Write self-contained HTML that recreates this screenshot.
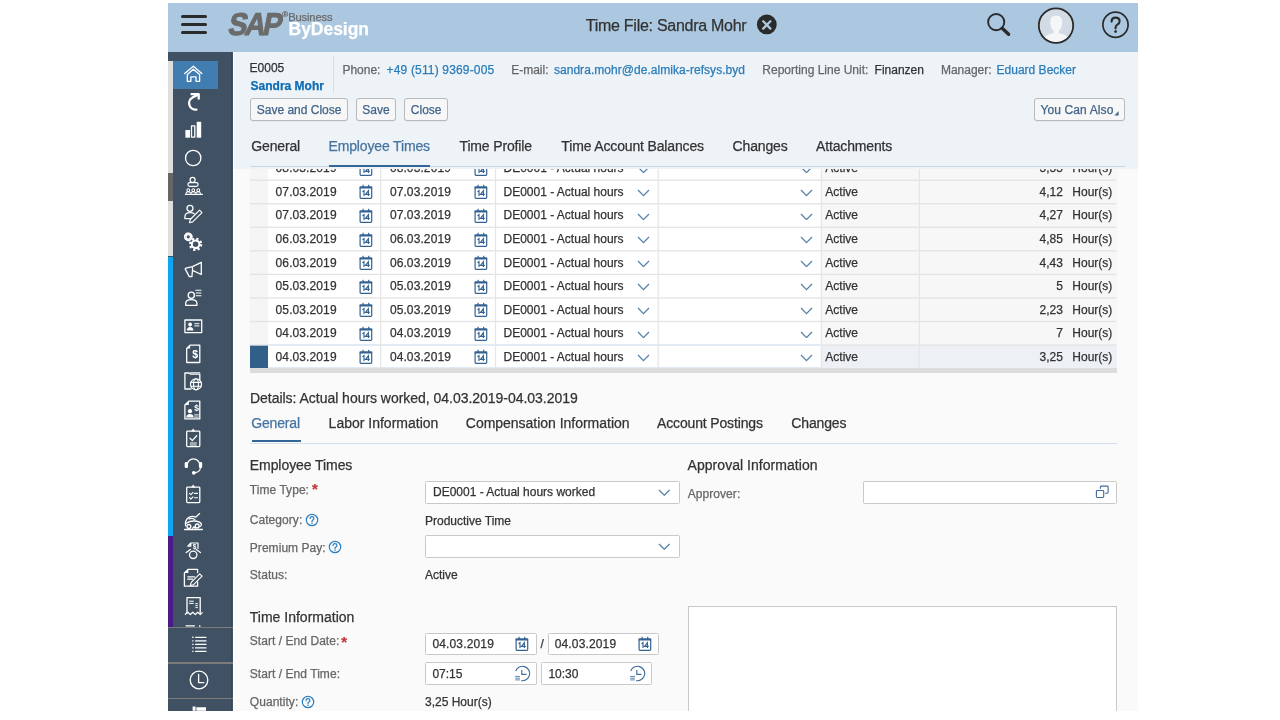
<!DOCTYPE html>
<html><head><meta charset="utf-8">
<style>
*{margin:0;padding:0;box-sizing:border-box}
html,body{width:1280px;height:720px;overflow:hidden;background:#fff;font-family:"Liberation Sans",sans-serif;color:#333}
.a{position:absolute}
.t{position:absolute;white-space:nowrap;line-height:1;-webkit-text-stroke:0.25px currentColor}
.lbl{color:#666;letter-spacing:0.05px}
.lbh{color:#666}
.lnk{color:#2b7cb9}
.dk{color:#333}
.btxt{color:#41648a}
.tsel{color:#4674a0}
</style></head><body>
<div id="root" style="position:absolute;left:0;top:0;width:1280px;height:720px;overflow:hidden;will-change:transform">

<div class="a" style="left:168.00px;top:3.00px;width:970.00px;height:707.80px;background:#fafafa;"></div>
<div class="a" style="left:250.00px;top:156.65px;width:17.80px;height:23.55px;background:#f5f5f5;"></div>
<div class="a" style="left:267.80px;top:156.65px;width:553.60px;height:23.55px;background:#fff;"></div>
<div class="a" style="left:821.40px;top:156.65px;width:295.20px;height:23.55px;background:#f7f7f7;"></div>
<div class="t dk" style="left:275.60px;top:162.39px;font-size:12px;letter-spacing:0.1px">08.03.2019</div>
<div class="t dk" style="left:389.90px;top:162.39px;font-size:12px;letter-spacing:0.1px">08.03.2019</div>
<svg class="a" style="left:359.40px;top:160.85px" width="14" height="15" viewBox="0 0 14 15"><rect x="1.1" y="3.1" width="11.6" height="11.2" rx="0.8" fill="none" stroke="#346392" stroke-width="1.2"/><rect x="0.6" y="2.5" width="12.6" height="2" fill="#346392"/><rect x="3.5" y="0.8" width="1.2" height="2.4" fill="#346392"/><rect x="9.1" y="0.8" width="1.2" height="2.4" fill="#346392"/><path d="M3.5 7.8 L5 6.7 V12.1 M9.4 12.1 V6.7 L6.5 10.3 H10.8" fill="none" stroke="#346392" stroke-width="1.15"/></svg>
<svg class="a" style="left:473.50px;top:160.85px" width="14" height="15" viewBox="0 0 14 15"><rect x="1.1" y="3.1" width="11.6" height="11.2" rx="0.8" fill="none" stroke="#346392" stroke-width="1.2"/><rect x="0.6" y="2.5" width="12.6" height="2" fill="#346392"/><rect x="3.5" y="0.8" width="1.2" height="2.4" fill="#346392"/><rect x="9.1" y="0.8" width="1.2" height="2.4" fill="#346392"/><path d="M3.5 7.8 L5 6.7 V12.1 M9.4 12.1 V6.7 L6.5 10.3 H10.8" fill="none" stroke="#346392" stroke-width="1.15"/></svg>
<div class="t dk" style="left:503.50px;top:162.39px;font-size:12px;">DE0001 - Actual hours</div>
<svg class="a" style="left:636.90px;top:165.65px" width="13" height="7.6" viewBox="0 0 13 7.6"><polyline points="1,1 6.5,6.6 12,1" fill="none" stroke="#5581aa" stroke-width="1.3"/></svg>
<svg class="a" style="left:800.10px;top:165.65px" width="13" height="7.6" viewBox="0 0 13 7.6"><polyline points="1,1 6.5,6.6 12,1" fill="none" stroke="#5581aa" stroke-width="1.3"/></svg>
<div class="t dk" style="left:825.30px;top:162.39px;font-size:12px;">Active</div>
<div class="t dk" style="right:217.20px;top:162.39px;font-size:12px">5,55</div>
<div class="t dk" style="left:1072.30px;top:162.39px;font-size:12px;">Hour(s)</div>
<div class="a" style="left:250.00px;top:180.20px;width:17.80px;height:23.55px;background:#f5f5f5;"></div>
<div class="a" style="left:267.80px;top:180.20px;width:553.60px;height:23.55px;background:#fff;"></div>
<div class="a" style="left:821.40px;top:180.20px;width:295.20px;height:23.55px;background:#f7f7f7;"></div>
<div class="t dk" style="left:275.60px;top:185.94px;font-size:12px;letter-spacing:0.1px">07.03.2019</div>
<div class="t dk" style="left:389.90px;top:185.94px;font-size:12px;letter-spacing:0.1px">07.03.2019</div>
<svg class="a" style="left:359.40px;top:184.40px" width="14" height="15" viewBox="0 0 14 15"><rect x="1.1" y="3.1" width="11.6" height="11.2" rx="0.8" fill="none" stroke="#346392" stroke-width="1.2"/><rect x="0.6" y="2.5" width="12.6" height="2" fill="#346392"/><rect x="3.5" y="0.8" width="1.2" height="2.4" fill="#346392"/><rect x="9.1" y="0.8" width="1.2" height="2.4" fill="#346392"/><path d="M3.5 7.8 L5 6.7 V12.1 M9.4 12.1 V6.7 L6.5 10.3 H10.8" fill="none" stroke="#346392" stroke-width="1.15"/></svg>
<svg class="a" style="left:473.50px;top:184.40px" width="14" height="15" viewBox="0 0 14 15"><rect x="1.1" y="3.1" width="11.6" height="11.2" rx="0.8" fill="none" stroke="#346392" stroke-width="1.2"/><rect x="0.6" y="2.5" width="12.6" height="2" fill="#346392"/><rect x="3.5" y="0.8" width="1.2" height="2.4" fill="#346392"/><rect x="9.1" y="0.8" width="1.2" height="2.4" fill="#346392"/><path d="M3.5 7.8 L5 6.7 V12.1 M9.4 12.1 V6.7 L6.5 10.3 H10.8" fill="none" stroke="#346392" stroke-width="1.15"/></svg>
<div class="t dk" style="left:503.50px;top:185.94px;font-size:12px;">DE0001 - Actual hours</div>
<svg class="a" style="left:636.90px;top:189.20px" width="13" height="7.6" viewBox="0 0 13 7.6"><polyline points="1,1 6.5,6.6 12,1" fill="none" stroke="#5581aa" stroke-width="1.3"/></svg>
<svg class="a" style="left:800.10px;top:189.20px" width="13" height="7.6" viewBox="0 0 13 7.6"><polyline points="1,1 6.5,6.6 12,1" fill="none" stroke="#5581aa" stroke-width="1.3"/></svg>
<div class="t dk" style="left:825.30px;top:185.94px;font-size:12px;">Active</div>
<div class="t dk" style="right:217.20px;top:185.94px;font-size:12px">4,12</div>
<div class="t dk" style="left:1072.30px;top:185.94px;font-size:12px;">Hour(s)</div>
<div class="a" style="left:250.00px;top:203.75px;width:17.80px;height:23.55px;background:#f5f5f5;"></div>
<div class="a" style="left:267.80px;top:203.75px;width:553.60px;height:23.55px;background:#fff;"></div>
<div class="a" style="left:821.40px;top:203.75px;width:295.20px;height:23.55px;background:#f7f7f7;"></div>
<div class="t dk" style="left:275.60px;top:209.49px;font-size:12px;letter-spacing:0.1px">07.03.2019</div>
<div class="t dk" style="left:389.90px;top:209.49px;font-size:12px;letter-spacing:0.1px">07.03.2019</div>
<svg class="a" style="left:359.40px;top:207.95px" width="14" height="15" viewBox="0 0 14 15"><rect x="1.1" y="3.1" width="11.6" height="11.2" rx="0.8" fill="none" stroke="#346392" stroke-width="1.2"/><rect x="0.6" y="2.5" width="12.6" height="2" fill="#346392"/><rect x="3.5" y="0.8" width="1.2" height="2.4" fill="#346392"/><rect x="9.1" y="0.8" width="1.2" height="2.4" fill="#346392"/><path d="M3.5 7.8 L5 6.7 V12.1 M9.4 12.1 V6.7 L6.5 10.3 H10.8" fill="none" stroke="#346392" stroke-width="1.15"/></svg>
<svg class="a" style="left:473.50px;top:207.95px" width="14" height="15" viewBox="0 0 14 15"><rect x="1.1" y="3.1" width="11.6" height="11.2" rx="0.8" fill="none" stroke="#346392" stroke-width="1.2"/><rect x="0.6" y="2.5" width="12.6" height="2" fill="#346392"/><rect x="3.5" y="0.8" width="1.2" height="2.4" fill="#346392"/><rect x="9.1" y="0.8" width="1.2" height="2.4" fill="#346392"/><path d="M3.5 7.8 L5 6.7 V12.1 M9.4 12.1 V6.7 L6.5 10.3 H10.8" fill="none" stroke="#346392" stroke-width="1.15"/></svg>
<div class="t dk" style="left:503.50px;top:209.49px;font-size:12px;">DE0001 - Actual hours</div>
<svg class="a" style="left:636.90px;top:212.75px" width="13" height="7.6" viewBox="0 0 13 7.6"><polyline points="1,1 6.5,6.6 12,1" fill="none" stroke="#5581aa" stroke-width="1.3"/></svg>
<svg class="a" style="left:800.10px;top:212.75px" width="13" height="7.6" viewBox="0 0 13 7.6"><polyline points="1,1 6.5,6.6 12,1" fill="none" stroke="#5581aa" stroke-width="1.3"/></svg>
<div class="t dk" style="left:825.30px;top:209.49px;font-size:12px;">Active</div>
<div class="t dk" style="right:217.20px;top:209.49px;font-size:12px">4,27</div>
<div class="t dk" style="left:1072.30px;top:209.49px;font-size:12px;">Hour(s)</div>
<div class="a" style="left:250.00px;top:227.30px;width:17.80px;height:23.55px;background:#f5f5f5;"></div>
<div class="a" style="left:267.80px;top:227.30px;width:553.60px;height:23.55px;background:#fff;"></div>
<div class="a" style="left:821.40px;top:227.30px;width:295.20px;height:23.55px;background:#f7f7f7;"></div>
<div class="t dk" style="left:275.60px;top:233.04px;font-size:12px;letter-spacing:0.1px">06.03.2019</div>
<div class="t dk" style="left:389.90px;top:233.04px;font-size:12px;letter-spacing:0.1px">06.03.2019</div>
<svg class="a" style="left:359.40px;top:231.50px" width="14" height="15" viewBox="0 0 14 15"><rect x="1.1" y="3.1" width="11.6" height="11.2" rx="0.8" fill="none" stroke="#346392" stroke-width="1.2"/><rect x="0.6" y="2.5" width="12.6" height="2" fill="#346392"/><rect x="3.5" y="0.8" width="1.2" height="2.4" fill="#346392"/><rect x="9.1" y="0.8" width="1.2" height="2.4" fill="#346392"/><path d="M3.5 7.8 L5 6.7 V12.1 M9.4 12.1 V6.7 L6.5 10.3 H10.8" fill="none" stroke="#346392" stroke-width="1.15"/></svg>
<svg class="a" style="left:473.50px;top:231.50px" width="14" height="15" viewBox="0 0 14 15"><rect x="1.1" y="3.1" width="11.6" height="11.2" rx="0.8" fill="none" stroke="#346392" stroke-width="1.2"/><rect x="0.6" y="2.5" width="12.6" height="2" fill="#346392"/><rect x="3.5" y="0.8" width="1.2" height="2.4" fill="#346392"/><rect x="9.1" y="0.8" width="1.2" height="2.4" fill="#346392"/><path d="M3.5 7.8 L5 6.7 V12.1 M9.4 12.1 V6.7 L6.5 10.3 H10.8" fill="none" stroke="#346392" stroke-width="1.15"/></svg>
<div class="t dk" style="left:503.50px;top:233.04px;font-size:12px;">DE0001 - Actual hours</div>
<svg class="a" style="left:636.90px;top:236.30px" width="13" height="7.6" viewBox="0 0 13 7.6"><polyline points="1,1 6.5,6.6 12,1" fill="none" stroke="#5581aa" stroke-width="1.3"/></svg>
<svg class="a" style="left:800.10px;top:236.30px" width="13" height="7.6" viewBox="0 0 13 7.6"><polyline points="1,1 6.5,6.6 12,1" fill="none" stroke="#5581aa" stroke-width="1.3"/></svg>
<div class="t dk" style="left:825.30px;top:233.04px;font-size:12px;">Active</div>
<div class="t dk" style="right:217.20px;top:233.04px;font-size:12px">4,85</div>
<div class="t dk" style="left:1072.30px;top:233.04px;font-size:12px;">Hour(s)</div>
<div class="a" style="left:250.00px;top:250.85px;width:17.80px;height:23.55px;background:#f5f5f5;"></div>
<div class="a" style="left:267.80px;top:250.85px;width:553.60px;height:23.55px;background:#fff;"></div>
<div class="a" style="left:821.40px;top:250.85px;width:295.20px;height:23.55px;background:#f7f7f7;"></div>
<div class="t dk" style="left:275.60px;top:256.59px;font-size:12px;letter-spacing:0.1px">06.03.2019</div>
<div class="t dk" style="left:389.90px;top:256.59px;font-size:12px;letter-spacing:0.1px">06.03.2019</div>
<svg class="a" style="left:359.40px;top:255.05px" width="14" height="15" viewBox="0 0 14 15"><rect x="1.1" y="3.1" width="11.6" height="11.2" rx="0.8" fill="none" stroke="#346392" stroke-width="1.2"/><rect x="0.6" y="2.5" width="12.6" height="2" fill="#346392"/><rect x="3.5" y="0.8" width="1.2" height="2.4" fill="#346392"/><rect x="9.1" y="0.8" width="1.2" height="2.4" fill="#346392"/><path d="M3.5 7.8 L5 6.7 V12.1 M9.4 12.1 V6.7 L6.5 10.3 H10.8" fill="none" stroke="#346392" stroke-width="1.15"/></svg>
<svg class="a" style="left:473.50px;top:255.05px" width="14" height="15" viewBox="0 0 14 15"><rect x="1.1" y="3.1" width="11.6" height="11.2" rx="0.8" fill="none" stroke="#346392" stroke-width="1.2"/><rect x="0.6" y="2.5" width="12.6" height="2" fill="#346392"/><rect x="3.5" y="0.8" width="1.2" height="2.4" fill="#346392"/><rect x="9.1" y="0.8" width="1.2" height="2.4" fill="#346392"/><path d="M3.5 7.8 L5 6.7 V12.1 M9.4 12.1 V6.7 L6.5 10.3 H10.8" fill="none" stroke="#346392" stroke-width="1.15"/></svg>
<div class="t dk" style="left:503.50px;top:256.59px;font-size:12px;">DE0001 - Actual hours</div>
<svg class="a" style="left:636.90px;top:259.85px" width="13" height="7.6" viewBox="0 0 13 7.6"><polyline points="1,1 6.5,6.6 12,1" fill="none" stroke="#5581aa" stroke-width="1.3"/></svg>
<svg class="a" style="left:800.10px;top:259.85px" width="13" height="7.6" viewBox="0 0 13 7.6"><polyline points="1,1 6.5,6.6 12,1" fill="none" stroke="#5581aa" stroke-width="1.3"/></svg>
<div class="t dk" style="left:825.30px;top:256.59px;font-size:12px;">Active</div>
<div class="t dk" style="right:217.20px;top:256.59px;font-size:12px">4,43</div>
<div class="t dk" style="left:1072.30px;top:256.59px;font-size:12px;">Hour(s)</div>
<div class="a" style="left:250.00px;top:274.40px;width:17.80px;height:23.55px;background:#f5f5f5;"></div>
<div class="a" style="left:267.80px;top:274.40px;width:553.60px;height:23.55px;background:#fff;"></div>
<div class="a" style="left:821.40px;top:274.40px;width:295.20px;height:23.55px;background:#f7f7f7;"></div>
<div class="t dk" style="left:275.60px;top:280.14px;font-size:12px;letter-spacing:0.1px">05.03.2019</div>
<div class="t dk" style="left:389.90px;top:280.14px;font-size:12px;letter-spacing:0.1px">05.03.2019</div>
<svg class="a" style="left:359.40px;top:278.60px" width="14" height="15" viewBox="0 0 14 15"><rect x="1.1" y="3.1" width="11.6" height="11.2" rx="0.8" fill="none" stroke="#346392" stroke-width="1.2"/><rect x="0.6" y="2.5" width="12.6" height="2" fill="#346392"/><rect x="3.5" y="0.8" width="1.2" height="2.4" fill="#346392"/><rect x="9.1" y="0.8" width="1.2" height="2.4" fill="#346392"/><path d="M3.5 7.8 L5 6.7 V12.1 M9.4 12.1 V6.7 L6.5 10.3 H10.8" fill="none" stroke="#346392" stroke-width="1.15"/></svg>
<svg class="a" style="left:473.50px;top:278.60px" width="14" height="15" viewBox="0 0 14 15"><rect x="1.1" y="3.1" width="11.6" height="11.2" rx="0.8" fill="none" stroke="#346392" stroke-width="1.2"/><rect x="0.6" y="2.5" width="12.6" height="2" fill="#346392"/><rect x="3.5" y="0.8" width="1.2" height="2.4" fill="#346392"/><rect x="9.1" y="0.8" width="1.2" height="2.4" fill="#346392"/><path d="M3.5 7.8 L5 6.7 V12.1 M9.4 12.1 V6.7 L6.5 10.3 H10.8" fill="none" stroke="#346392" stroke-width="1.15"/></svg>
<div class="t dk" style="left:503.50px;top:280.14px;font-size:12px;">DE0001 - Actual hours</div>
<svg class="a" style="left:636.90px;top:283.40px" width="13" height="7.6" viewBox="0 0 13 7.6"><polyline points="1,1 6.5,6.6 12,1" fill="none" stroke="#5581aa" stroke-width="1.3"/></svg>
<svg class="a" style="left:800.10px;top:283.40px" width="13" height="7.6" viewBox="0 0 13 7.6"><polyline points="1,1 6.5,6.6 12,1" fill="none" stroke="#5581aa" stroke-width="1.3"/></svg>
<div class="t dk" style="left:825.30px;top:280.14px;font-size:12px;">Active</div>
<div class="t dk" style="right:217.20px;top:280.14px;font-size:12px">5</div>
<div class="t dk" style="left:1072.30px;top:280.14px;font-size:12px;">Hour(s)</div>
<div class="a" style="left:250.00px;top:297.95px;width:17.80px;height:23.55px;background:#f5f5f5;"></div>
<div class="a" style="left:267.80px;top:297.95px;width:553.60px;height:23.55px;background:#fff;"></div>
<div class="a" style="left:821.40px;top:297.95px;width:295.20px;height:23.55px;background:#f7f7f7;"></div>
<div class="t dk" style="left:275.60px;top:303.69px;font-size:12px;letter-spacing:0.1px">05.03.2019</div>
<div class="t dk" style="left:389.90px;top:303.69px;font-size:12px;letter-spacing:0.1px">05.03.2019</div>
<svg class="a" style="left:359.40px;top:302.15px" width="14" height="15" viewBox="0 0 14 15"><rect x="1.1" y="3.1" width="11.6" height="11.2" rx="0.8" fill="none" stroke="#346392" stroke-width="1.2"/><rect x="0.6" y="2.5" width="12.6" height="2" fill="#346392"/><rect x="3.5" y="0.8" width="1.2" height="2.4" fill="#346392"/><rect x="9.1" y="0.8" width="1.2" height="2.4" fill="#346392"/><path d="M3.5 7.8 L5 6.7 V12.1 M9.4 12.1 V6.7 L6.5 10.3 H10.8" fill="none" stroke="#346392" stroke-width="1.15"/></svg>
<svg class="a" style="left:473.50px;top:302.15px" width="14" height="15" viewBox="0 0 14 15"><rect x="1.1" y="3.1" width="11.6" height="11.2" rx="0.8" fill="none" stroke="#346392" stroke-width="1.2"/><rect x="0.6" y="2.5" width="12.6" height="2" fill="#346392"/><rect x="3.5" y="0.8" width="1.2" height="2.4" fill="#346392"/><rect x="9.1" y="0.8" width="1.2" height="2.4" fill="#346392"/><path d="M3.5 7.8 L5 6.7 V12.1 M9.4 12.1 V6.7 L6.5 10.3 H10.8" fill="none" stroke="#346392" stroke-width="1.15"/></svg>
<div class="t dk" style="left:503.50px;top:303.69px;font-size:12px;">DE0001 - Actual hours</div>
<svg class="a" style="left:636.90px;top:306.95px" width="13" height="7.6" viewBox="0 0 13 7.6"><polyline points="1,1 6.5,6.6 12,1" fill="none" stroke="#5581aa" stroke-width="1.3"/></svg>
<svg class="a" style="left:800.10px;top:306.95px" width="13" height="7.6" viewBox="0 0 13 7.6"><polyline points="1,1 6.5,6.6 12,1" fill="none" stroke="#5581aa" stroke-width="1.3"/></svg>
<div class="t dk" style="left:825.30px;top:303.69px;font-size:12px;">Active</div>
<div class="t dk" style="right:217.20px;top:303.69px;font-size:12px">2,23</div>
<div class="t dk" style="left:1072.30px;top:303.69px;font-size:12px;">Hour(s)</div>
<div class="a" style="left:250.00px;top:321.50px;width:17.80px;height:23.55px;background:#f5f5f5;"></div>
<div class="a" style="left:267.80px;top:321.50px;width:553.60px;height:23.55px;background:#fff;"></div>
<div class="a" style="left:821.40px;top:321.50px;width:295.20px;height:23.55px;background:#f7f7f7;"></div>
<div class="t dk" style="left:275.60px;top:327.24px;font-size:12px;letter-spacing:0.1px">04.03.2019</div>
<div class="t dk" style="left:389.90px;top:327.24px;font-size:12px;letter-spacing:0.1px">04.03.2019</div>
<svg class="a" style="left:359.40px;top:325.70px" width="14" height="15" viewBox="0 0 14 15"><rect x="1.1" y="3.1" width="11.6" height="11.2" rx="0.8" fill="none" stroke="#346392" stroke-width="1.2"/><rect x="0.6" y="2.5" width="12.6" height="2" fill="#346392"/><rect x="3.5" y="0.8" width="1.2" height="2.4" fill="#346392"/><rect x="9.1" y="0.8" width="1.2" height="2.4" fill="#346392"/><path d="M3.5 7.8 L5 6.7 V12.1 M9.4 12.1 V6.7 L6.5 10.3 H10.8" fill="none" stroke="#346392" stroke-width="1.15"/></svg>
<svg class="a" style="left:473.50px;top:325.70px" width="14" height="15" viewBox="0 0 14 15"><rect x="1.1" y="3.1" width="11.6" height="11.2" rx="0.8" fill="none" stroke="#346392" stroke-width="1.2"/><rect x="0.6" y="2.5" width="12.6" height="2" fill="#346392"/><rect x="3.5" y="0.8" width="1.2" height="2.4" fill="#346392"/><rect x="9.1" y="0.8" width="1.2" height="2.4" fill="#346392"/><path d="M3.5 7.8 L5 6.7 V12.1 M9.4 12.1 V6.7 L6.5 10.3 H10.8" fill="none" stroke="#346392" stroke-width="1.15"/></svg>
<div class="t dk" style="left:503.50px;top:327.24px;font-size:12px;">DE0001 - Actual hours</div>
<svg class="a" style="left:636.90px;top:330.50px" width="13" height="7.6" viewBox="0 0 13 7.6"><polyline points="1,1 6.5,6.6 12,1" fill="none" stroke="#5581aa" stroke-width="1.3"/></svg>
<svg class="a" style="left:800.10px;top:330.50px" width="13" height="7.6" viewBox="0 0 13 7.6"><polyline points="1,1 6.5,6.6 12,1" fill="none" stroke="#5581aa" stroke-width="1.3"/></svg>
<div class="t dk" style="left:825.30px;top:327.24px;font-size:12px;">Active</div>
<div class="t dk" style="right:217.20px;top:327.24px;font-size:12px">7</div>
<div class="t dk" style="left:1072.30px;top:327.24px;font-size:12px;">Hour(s)</div>
<div class="a" style="left:250.00px;top:345.05px;width:17.80px;height:23.55px;background:#325f8a;"></div>
<div class="a" style="left:267.80px;top:345.05px;width:553.60px;height:23.55px;background:#fff;"></div>
<div class="a" style="left:821.40px;top:345.05px;width:295.20px;height:23.55px;background:#edf1f5;"></div>
<div class="t dk" style="left:275.60px;top:350.79px;font-size:12px;letter-spacing:0.1px">04.03.2019</div>
<div class="t dk" style="left:389.90px;top:350.79px;font-size:12px;letter-spacing:0.1px">04.03.2019</div>
<svg class="a" style="left:359.40px;top:349.25px" width="14" height="15" viewBox="0 0 14 15"><rect x="1.1" y="3.1" width="11.6" height="11.2" rx="0.8" fill="none" stroke="#346392" stroke-width="1.2"/><rect x="0.6" y="2.5" width="12.6" height="2" fill="#346392"/><rect x="3.5" y="0.8" width="1.2" height="2.4" fill="#346392"/><rect x="9.1" y="0.8" width="1.2" height="2.4" fill="#346392"/><path d="M3.5 7.8 L5 6.7 V12.1 M9.4 12.1 V6.7 L6.5 10.3 H10.8" fill="none" stroke="#346392" stroke-width="1.15"/></svg>
<svg class="a" style="left:473.50px;top:349.25px" width="14" height="15" viewBox="0 0 14 15"><rect x="1.1" y="3.1" width="11.6" height="11.2" rx="0.8" fill="none" stroke="#346392" stroke-width="1.2"/><rect x="0.6" y="2.5" width="12.6" height="2" fill="#346392"/><rect x="3.5" y="0.8" width="1.2" height="2.4" fill="#346392"/><rect x="9.1" y="0.8" width="1.2" height="2.4" fill="#346392"/><path d="M3.5 7.8 L5 6.7 V12.1 M9.4 12.1 V6.7 L6.5 10.3 H10.8" fill="none" stroke="#346392" stroke-width="1.15"/></svg>
<div class="t dk" style="left:503.50px;top:350.79px;font-size:12px;">DE0001 - Actual hours</div>
<svg class="a" style="left:636.90px;top:354.05px" width="13" height="7.6" viewBox="0 0 13 7.6"><polyline points="1,1 6.5,6.6 12,1" fill="none" stroke="#5581aa" stroke-width="1.3"/></svg>
<svg class="a" style="left:800.10px;top:354.05px" width="13" height="7.6" viewBox="0 0 13 7.6"><polyline points="1,1 6.5,6.6 12,1" fill="none" stroke="#5581aa" stroke-width="1.3"/></svg>
<div class="t dk" style="left:825.30px;top:350.79px;font-size:12px;">Active</div>
<div class="t dk" style="right:217.20px;top:350.79px;font-size:12px">3,25</div>
<div class="t dk" style="left:1072.30px;top:350.79px;font-size:12px;">Hour(s)</div>
<svg class="a" style="left:0;top:0" width="1280" height="720" viewBox="0 0 1280 720"><rect x="250" y="179.55" width="866.6" height="1.3" fill="#e3e3e3"/><rect x="250" y="203.10" width="866.6" height="1.3" fill="#e3e3e3"/><rect x="250" y="226.65" width="866.6" height="1.3" fill="#e3e3e3"/><rect x="250" y="250.20" width="866.6" height="1.3" fill="#e3e3e3"/><rect x="250" y="273.75" width="866.6" height="1.3" fill="#e3e3e3"/><rect x="250" y="297.30" width="866.6" height="1.3" fill="#e3e3e3"/><rect x="250" y="320.85" width="866.6" height="1.3" fill="#e3e3e3"/><rect x="250" y="344.40" width="866.6" height="1.3" fill="#e3e3e3"/></svg>
<div class="a" style="left:267.80px;top:344.45px;width:553.60px;height:1.80px;background:#e2eaf3;"></div>
<div class="a" style="left:267.80px;top:367.10px;width:553.60px;height:1.50px;background:#e2eaf3;"></div>
<svg class="a" style="left:0;top:0" width="1280" height="720" viewBox="0 0 1280 720"><rect x="380.05" y="156.65" width="1.3" height="211.95" fill="#e6e6e6"/><rect x="494.85" y="156.65" width="1.3" height="211.95" fill="#e6e6e6"/><rect x="657.55" y="156.65" width="1.3" height="211.95" fill="#e6e6e6"/><rect x="820.75" y="156.65" width="1.3" height="211.95" fill="#e6e6e6"/><rect x="918.65" y="156.65" width="1.3" height="211.95" fill="#e6e6e6"/></svg>
<div class="a" style="left:250.00px;top:368.40px;width:866.60px;height:4.60px;background:#dcdcdc;"></div>
<div class="a" style="left:168.00px;top:3.00px;width:970.00px;height:49.00px;background:#abc8e0;"></div>
<div class="a" style="left:181.20px;top:14.90px;width:26.10px;height:3.60px;background:#2b2b2b;border-radius:2px;"></div>
<div class="a" style="left:181.20px;top:22.90px;width:26.10px;height:3.60px;background:#2b2b2b;border-radius:2px;"></div>
<div class="a" style="left:181.20px;top:30.70px;width:26.10px;height:3.60px;background:#2b2b2b;border-radius:2px;"></div>
<div class="t" style="left:226.4px;top:9.0px;font-size:31.5px;font-weight:bold;color:#6b6b6b;letter-spacing:-2.6px;transform:skewX(-11deg) scaleX(0.9);transform-origin:left bottom;-webkit-text-stroke:1.1px #6b6b6b">SAP</div>
<div class="t" style="left:282.2px;top:11.4px;font-size:8px;color:#6b6b6b">&#174;</div>
<div class="t " style="left:288.20px;top:11.82px;font-size:11.2px;color:#6b6b6b;letter-spacing:-0.15px">Business</div>
<div class="t " style="left:288.60px;top:21.09px;font-size:17.5px;color:#fff;font-weight:bold;letter-spacing:-0.05px">ByDesign</div>
<div class="t " style="left:585.80px;top:18.06px;font-size:16px;color:#333;letter-spacing:-0.27px">Time File: Sandra Mohr</div>
<svg class="a" style="left:756px;top:14px" width="22" height="22" viewBox="0 0 22 22"><circle cx="10.8" cy="10.4" r="9.9" fill="#2b2b2b"/><path d="M7.2 7.2 L14.4 14.6 M14.4 7.2 L7.2 14.6" stroke="#abc8e0" stroke-width="2.3" stroke-linecap="round"/></svg>
<svg class="a" style="left:984px;top:11px" width="30" height="28" viewBox="0 0 30 28"><circle cx="12.2" cy="11.1" r="8.1" fill="none" stroke="#2b2b2b" stroke-width="1.9"/><path d="M18.2 17.2 L24.6 23.3" stroke="#2b2b2b" stroke-width="3.4" stroke-linecap="round"/></svg>
<svg class="a" style="left:1036px;top:6px" width="40" height="40" viewBox="0 0 40 40"><defs><clipPath id="cp"><circle cx="20" cy="19.6" r="17"/></clipPath></defs><circle cx="20" cy="19.6" r="17" fill="#d3dce4"/><g clip-path="url(#cp)" fill="#f4f6f8"><path d="M14.2 17 Q13.6 9.6 20.2 9.6 Q26.8 9.6 26.2 17 Q25.8 22.5 23 24.6 L23 27.2 Q30.5 28.5 33 33 L34 40 L6 40 L7.2 33 Q9.8 28.5 17.4 27.2 L17.4 24.6 Q14.6 22.5 14.2 17 Z"/></g><circle cx="20" cy="19.6" r="17.2" fill="none" stroke="#2b2b2b" stroke-width="1.8"/></svg>
<svg class="a" style="left:1100px;top:10px" width="32" height="30" viewBox="0 0 32 30"><circle cx="15.5" cy="14.8" r="12.6" fill="none" stroke="#2b2b2b" stroke-width="1.7"/><path d="M11.6 11.6 Q11.6 7.6 15.6 7.6 Q19.6 7.6 19.6 11.2 Q19.6 13.4 17.3 14.6 Q15.6 15.6 15.6 17.6 L15.6 18.4" fill="none" stroke="#2b2b2b" stroke-width="2.1" stroke-linecap="round"/><circle cx="15.6" cy="21.6" r="1.4" fill="#2b2b2b"/></svg>
<div class="a" style="left:232.50px;top:52.00px;width:905.50px;height:116.80px;background:#eef3f8;"></div>
<div class="t dk" style="left:249.60px;top:61.94px;font-size:12px;">E0005</div>
<div class="t " style="left:250.60px;top:80.34px;font-size:12px;color:#0f6cb2;font-weight:bold">Sandra Mohr</div>
<div class="a" style="left:333.00px;top:56.00px;width:1.20px;height:37.00px;background:#d3dee9;"></div>
<div class="t lbh" style="left:342.40px;top:64.34px;font-size:12px;">Phone:</div>
<div class="t lnk" style="left:386.60px;top:64.34px;font-size:12px;letter-spacing:0.16px">+49 (511) 9369-005</div>
<div class="t lbh" style="left:511.20px;top:64.34px;font-size:12px;">E-mail:</div>
<div class="t lnk" style="left:553.90px;top:64.34px;font-size:12px;letter-spacing:0.05px">sandra.mohr@de.almika-refsys.byd</div>
<div class="t lbh" style="left:762.30px;top:64.34px;font-size:12px;">Reporting Line Unit:</div>
<div class="t dk" style="left:874.60px;top:64.34px;font-size:12px;">Finanzen</div>
<div class="t lbh" style="left:940.90px;top:64.34px;font-size:12px;">Manager:</div>
<div class="t lnk" style="left:996.60px;top:64.34px;font-size:12px;">Eduard Becker</div>
<div class="a" style="left:250.30px;top:98.20px;width:97.60px;height:22.70px;background:#f7f7f7;border:1px solid #b9b9b9;border-radius:3px;box-shadow:0 0.5px 0.5px rgba(0,0,0,0.08);"></div>
<div class="t btxt" style="left:250.30px;width:97.60px;top:104.14px;font-size:12px;text-align:center">Save and Close</div>
<div class="a" style="left:356.20px;top:98.20px;width:39.60px;height:22.70px;background:#f7f7f7;border:1px solid #b9b9b9;border-radius:3px;box-shadow:0 0.5px 0.5px rgba(0,0,0,0.08);"></div>
<div class="t btxt" style="left:356.20px;width:39.60px;top:104.14px;font-size:12px;text-align:center">Save</div>
<div class="a" style="left:404.30px;top:98.20px;width:43.70px;height:22.70px;background:#f7f7f7;border:1px solid #b9b9b9;border-radius:3px;box-shadow:0 0.5px 0.5px rgba(0,0,0,0.08);"></div>
<div class="t btxt" style="left:404.30px;width:43.70px;top:104.14px;font-size:12px;text-align:center">Close</div>
<div class="a" style="left:1034.30px;top:98.20px;width:90.30px;height:22.70px;background:#f7f7f7;border:1px solid #b9b9b9;border-radius:3px;box-shadow:0 0.5px 0.5px rgba(0,0,0,0.08);"></div>
<div class="t btxt" style="left:1040.60px;top:104.14px;font-size:12px;letter-spacing:0.1px">You Can Also</div>
<svg class="a" style="left:1113.5px;top:110.5px" width="5" height="5" viewBox="0 0 5 5"><path d="M0.3 4.6 L4.6 0.3 V4.6 Z" fill="#41648a"/></svg>
<div class="t dk" style="left:251.30px;top:139.40px;font-size:14px;letter-spacing:-0.15px">General</div>
<div class="t tsel" style="left:328.50px;top:139.40px;font-size:14px;letter-spacing:-0.15px">Employee Times</div>
<div class="t dk" style="left:459.50px;top:139.40px;font-size:14px;letter-spacing:-0.15px">Time Profile</div>
<div class="t dk" style="left:561.30px;top:139.40px;font-size:14px;letter-spacing:-0.15px">Time Account Balances</div>
<div class="t dk" style="left:732.60px;top:139.40px;font-size:14px;letter-spacing:-0.15px">Changes</div>
<div class="t dk" style="left:816.00px;top:139.40px;font-size:14px;letter-spacing:-0.15px">Attachments</div>
<div class="a" style="left:250.00px;top:165.60px;width:874.60px;height:1.40px;background:#c8d8e8;"></div>
<div class="a" style="left:329.20px;top:165.40px;width:101.30px;height:1.80px;background:#346798;"></div>
<div class="a" style="left:168.00px;top:52.00px;width:64.50px;height:658.80px;background:#3f5162;"></div>
<div class="a" style="left:231.40px;top:52.00px;width:1.10px;height:658.80px;background:#36485a;"></div>
<div class="a" style="left:232.50px;top:52.00px;width:1.50px;height:658.80px;background:#ffffff;"></div>
<div class="a" style="left:168.00px;top:61.00px;width:4.50px;height:111.60px;background:#dedede;"></div>
<div class="a" style="left:168.00px;top:172.60px;width:4.50px;height:28.00px;background:#666;"></div>
<div class="a" style="left:168.00px;top:200.60px;width:4.50px;height:55.90px;background:#dedede;"></div>
<div class="a" style="left:168.00px;top:256.50px;width:4.50px;height:279.50px;background:#10a5f0;"></div>
<div class="a" style="left:168.00px;top:536.00px;width:4.50px;height:90.60px;background:#4a1b86;"></div>
<div class="a" style="left:172.50px;top:61.00px;width:45.50px;height:28.00px;background:#427db2;"></div>
<div class="a" style="left:168.00px;top:626.50px;width:64.50px;height:1.40px;background:#7b7b7b;"></div>
<div class="a" style="left:168.00px;top:662.20px;width:64.50px;height:1.40px;background:#7b7b7b;"></div>
<div class="a" style="left:168.00px;top:698.05px;width:64.50px;height:1.40px;background:#7b7b7b;"></div>
<div class="a" style="left:168.00px;top:710.80px;width:970.00px;height:9.20px;background:#fff;"></div>
<svg class="a" style="left:168px;top:52px" width="64.5" height="659" viewBox="168 52 64.5 659">
<g fill="none" stroke="#fff" stroke-width="1.3" stroke-linejoin="round" stroke-linecap="round">
<path d="M184.7 73.6 L193.4 66.2 L201.8 73.6"/>
<path d="M187.3 81.3 V74.4 L193.4 69.2 L199.6 74.4 V81.3 H196 V76.8 H190.9 V81.3 Z"/>
<path d="M196.4 109.6 A6.5 6.5 0 0 1 192.6 97.4 L197.6 94.9" stroke-width="2.3"/>
<path d="M190.6 94.2 H198.7 V99.6" stroke-width="2.3" stroke-linecap="butt"/>
<rect x="191.5" y="125.8" width="3.3" height="11.3" stroke-width="1.3"/>
<circle cx="193.2" cy="158" r="7.7"/>
<circle cx="192.6" cy="179.9" r="2.5" stroke-width="1.2"/>
<rect x="188" y="182.6" width="10" height="3.7" rx="1.5" stroke-width="1.2"/>
<circle cx="188.3" cy="190.2" r="1.4" stroke-width="1.1"/><circle cx="193.3" cy="190.2" r="1.4" stroke-width="1.1"/><circle cx="198.3" cy="190.2" r="1.4" stroke-width="1.1"/>
<path d="M185.5 194.4 H202.3" stroke-width="1.4"/>
<path d="M186 193.2 Q186.5 191.8 188.3 191.8 Q190 191.8 190.5 193.2 M191 193.2 Q191.5 191.8 193.3 191.8 Q195 191.8 195.5 193.2 M196 193.2 Q196.5 191.8 198.3 191.8 Q200 191.8 200.5 193.2" stroke-width="1.1"/>
<circle cx="190" cy="208.3" r="3"/>
<path d="M184.9 218.6 V216.8 Q185 212.7 190 212.7 Q192.6 212.7 194.2 213.8 M184.9 218.6 H190.5"/>
<path d="M189.4 222.7 L190.3 219.5 L199.6 210.2 L202 212.6 L192.7 221.9 Z" stroke-width="1.1"/>
<circle cx="188.3" cy="236.8" r="3.5" stroke-width="1.9" stroke-dasharray="1.4 1.35"/>
<circle cx="188.3" cy="236.8" r="2.2" stroke-width="1.2"/>
<circle cx="195.6" cy="244.3" r="5.6" stroke-width="2.2" stroke-dasharray="2.2 2.2" stroke-linecap="butt"/>
<circle cx="195.6" cy="244.3" r="3.8" stroke-width="2.1"/>
<path d="M201.3 262.3 V274.5 L192.5 270.4 L191.9 276.6 H189.3 L185.4 269.4 Q184.9 268.5 185.9 268.2 L192.5 266.7 Z M192.5 266.7 V270.4" stroke-width="1.3"/>
<circle cx="191.3" cy="295.3" r="3.1"/>
<path d="M185.7 305.3 V303.2 Q185.7 299.6 191.3 299.6 Q196.9 299.6 196.9 303.2 V305.3 Z"/>
<path d="M195.8 290.2 H201 M196.2 293 H201 M196.2 295.8 H201" stroke-width="1.1"/>
<rect x="184.9" y="320" width="16.8" height="12.6"/>
<path d="M194.8 323.7 H199 M194.8 325.9 H199" stroke-width="1"/>
<path d="M190.1 345.1 H199.8 V362.5 H186.7 V348.5 Z"/>
<path d="M199.8 380 V374.1 H190.3 L189.2 373 H184.9 V389 H191"/>
<path d="M190.6 372.8 H199.8" stroke-width="1.1"/>
<circle cx="196" cy="384.3" r="5.5" stroke-width="1.2"/>
<ellipse cx="196" cy="384.3" rx="2.4" ry="5.5" stroke-width="1.1"/>
<path d="M190.8 382.4 H201.2 M190.8 386.2 H201.2" stroke-width="1.1"/>
<path d="M188.8 401.1 H199.8 V418.9 H184.9 V405 Z"/>
<path d="M194.6 414.9 H198.4 M194.6 417.1 H198.4" stroke-width="1"/>
<rect x="186.7" y="431.2" width="13.1" height="15.4" rx="0.8"/>
<path d="M190 438.2 L192.3 440.6 L196.7 435.8"/>
<path d="M190.2 443 H196.4 M190.2 445 H196.4" stroke-width="1"/>
<path d="M187.2 465.2 A6.3 6.3 0 1 1 199.8 465.2" stroke-width="1.3"/>
<path d="M200.4 467.8 Q200 472.6 194.2 472.8" stroke-width="1.2"/>
<rect x="186.7" y="487.2" width="13.1" height="15.4" rx="0.8"/>
<path d="M189.5 493.3 L190.9 494.7 L193 492.4 M189.5 497.7 L190.9 499.1 L193 496.8 M194.5 493.4 H197.5 M194.5 497.8 H197.5" stroke-width="1.1"/>
<path d="M185.6 525.8 Q184.6 520.6 188.6 517.6 Q192.2 515.2 195.6 517.2 L199.6 513.6" stroke-width="1.3"/>
<path d="M186.2 523.2 Q189.8 520.8 194.6 521 Q199.6 521.3 201.3 523.8 Q201.8 526.3 199.4 526.6" stroke-width="1.3"/>
<path d="M188.8 519 Q192 517.6 195 519.6" stroke-width="1.1"/>
<path d="M192.6 528.4 L194 526.5 L195.2 528.4" stroke-width="1.1"/>
<circle cx="188.9" cy="526.4" r="1.9" stroke-width="1.3"/><circle cx="197.2" cy="525.9" r="1.9" stroke-width="1.3"/>
<path d="M184.6 529.6 H202.3" stroke-width="1.5"/>
<path d="M186.2 552.6 L190.4 549.4 M200.4 552.6 L196.2 549.4" stroke-width="1.3"/>
<circle cx="193.2" cy="554.8" r="3.7" stroke-width="1.3"/>
<path d="M187.8 546.2 L190.8 543 H198 V548.4 M187.8 546.2 H190.8 V543" stroke-width="1.2"/>
<path d="M184.4 573 L188.3 569.3 H197.6 V572.6 M197.6 582 V586.2 H184.4 V573" stroke-width="1.3"/>
<path d="M187.8 576.8 H194.6 M187.8 579.2 H192.6" stroke-width="1.2"/>
<path d="M190.2 585.6 L191.2 582.3 L199.7 573.8 L202.1 576.2 L193.6 584.7 Z" stroke-width="1.1"/>
<path d="M187 613 V597.6 H200.2 V613" stroke-width="1.3"/>
<path d="M185.3 614.3 L187.8 612.2 L190.3 614.5 L192.8 612.2 L195.3 614.5 L197.8 612.2 L200.3 614.5 L202.2 612.6" stroke-width="1.2"/>
<path d="M189.5 601.2 H193.3 M189.5 603.4 H193.3 M195.8 603.6 H197.4 M195.8 605.6 H197.4 M195.8 607.6 H197.4" stroke-width="1"/>
<path d="M186 625.8 H194.5 M199.8 625.5 V626.5" stroke-width="1.2"/>
<path d="M195.6 637.3 H206 M195.6 640.9 H206 M195.6 644.4 H206 M195.6 647.9 H206 M195.6 651.4 H206" stroke-width="1.2"/>
<circle cx="199" cy="680" r="8.8" stroke-width="1.3"/>
<path d="M198.6 674.3 V682.6 H203.8" stroke-width="1.3"/>
</g>
<g fill="#fff">
<rect x="185.4" y="130" width="4.6" height="7.7"/>
<rect x="196.7" y="121.8" width="4.5" height="15.9"/>
<circle cx="190.1" cy="324.5" r="1.9"/>
<path d="M186.8 330.6 Q187 327.1 190.1 327.1 Q193.2 327.1 193.4 330.6 Z"/>
<path d="M186.7 348.5 L190.1 345.1 V348.5 Z"/>
<path d="M184.9 405 L188.8 401.1 V405 Z"/>
<circle cx="190" cy="411.2" r="2.1"/>
<path d="M186.2 417.6 Q186.5 413.9 190 413.9 Q193.5 413.9 193.8 417.6 Z"/>
<path d="M191 431.5 L193.2 428.6 L195.4 431.5 Z"/>
<path d="M191 487.5 L193.2 484.6 L195.4 487.5 Z"/>
<rect x="184.7" y="462.1" width="3.3" height="5.9" rx="1.3"/>
<rect x="198.9" y="462.1" width="3.3" height="5.9" rx="1.3"/>
<circle cx="193.8" cy="472.8" r="1.9"/>
<path d="M184.3 573 L188.3 569.2 V573 Z"/>
<path d="M192.2 636.6 h1.3 v1.3 h-1.3z M192.2 640.2 h1.3 v1.3 h-1.3z M192.2 643.7 h1.3 v1.3 h-1.3z M192.2 647.2 h1.3 v1.3 h-1.3z M192.2 650.7 h1.3 v1.3 h-1.3z"/>
<path d="M192.6 710.8 V706.4 H195.6 V710.8 Z M196.4 710.8 V707.2 H206 V710.8 Z"/>
</g>
<g fill="#fff" font-family="Liberation Sans" font-weight="bold" text-anchor="middle">
<text x="195.2" y="358.4" font-size="10.5">$</text>
<text x="196.6" y="410.5" font-size="8.5">$</text>
<text x="194.6" y="549" font-size="6.5">$</text>
</g>
</svg>

<div class="t dk" style="left:250.00px;top:390.65px;font-size:14px;letter-spacing:-0.03px">Details: Actual hours worked, 04.03.2019-04.03.2019</div>
<div class="t tsel" style="left:251.20px;top:416.15px;font-size:14px;letter-spacing:-0.15px">General</div>
<div class="t dk" style="left:328.60px;top:416.15px;font-size:14px;letter-spacing:0.0px">Labor Information</div>
<div class="t dk" style="left:465.80px;top:416.15px;font-size:14px;letter-spacing:-0.02px">Compensation Information</div>
<div class="t dk" style="left:657.00px;top:416.15px;font-size:14px;letter-spacing:-0.15px">Account Postings</div>
<div class="t dk" style="left:791.30px;top:416.15px;font-size:14px;letter-spacing:-0.15px">Changes</div>
<div class="a" style="left:250.00px;top:442.60px;width:866.60px;height:1.30px;background:#d5e0ea;"></div>
<div class="a" style="left:252.00px;top:440.10px;width:49.00px;height:1.70px;background:#346798;"></div>
<div class="t dk" style="left:249.80px;top:458.45px;font-size:14px;letter-spacing:-0.07px">Employee Times</div>
<div class="t dk" style="left:687.60px;top:458.45px;font-size:14px;letter-spacing:0.04px">Approval Information</div>
<div class="t lbl" style="left:249.80px;top:483.74px;font-size:12px;">Time Type:</div>
<div class="t lbl" style="left:249.80px;top:514.44px;font-size:12px;">Category:</div>
<div class="t lbl" style="left:249.80px;top:541.54px;font-size:12px;">Premium Pay:</div>
<div class="t lbl" style="left:249.80px;top:568.64px;font-size:12px;">Status:</div>
<div class="t dk" style="left:249.80px;top:610.45px;font-size:14px;letter-spacing:0px">Time Information</div>
<div class="t lbl" style="left:249.80px;top:635.24px;font-size:12px;">Start / End Date:</div>
<div class="t lbl" style="left:249.80px;top:668.14px;font-size:12px;">Start / End Time:</div>
<div class="t lbl" style="left:249.80px;top:695.94px;font-size:12px;">Quantity:</div>
<div class="t lbl" style="left:687.80px;top:487.64px;font-size:12px;">Approver:</div>
<div class="a" style="left:425.30px;top:481.20px;width:254.40px;height:22.70px;background:#fff;border:1px solid #c9c9c9;border-radius:1.5px;"></div>
<div class="t dk" style="left:433.00px;top:486.24px;font-size:12px;">DE0001 - Actual hours worked</div>
<svg class="a" style="left:658.20px;top:489.30px" width="12.6" height="7.2" viewBox="0 0 12.6 7.2"><polyline points="1,1 6.3,6.2 11.6,1" fill="none" stroke="#5581aa" stroke-width="1.3"/></svg>
<div class="t dk" style="left:425.00px;top:514.54px;font-size:12px;">Productive Time</div>
<div class="a" style="left:425.30px;top:535.20px;width:254.40px;height:22.50px;background:#fff;border:1px solid #c9c9c9;border-radius:1.5px;"></div>
<svg class="a" style="left:658.20px;top:542.90px" width="12.6" height="7.2" viewBox="0 0 12.6 7.2"><polyline points="1,1 6.3,6.2 11.6,1" fill="none" stroke="#5581aa" stroke-width="1.3"/></svg>
<div class="t dk" style="left:425.00px;top:568.64px;font-size:12px;">Active</div>
<div class="a" style="left:311.40px;top:484.00px;width:7.00px;height:6.00px;background:transparent;"></div>
<div class="t" style="left:312.0px;top:481.2px;font-size:15px;font-weight:bold;color:#c63a3f">*</div>
<div class="t" style="left:341.2px;top:634px;font-size:15px;font-weight:bold;color:#c63a3f">*</div>
<svg class="a" style="left:304.80px;top:513.00px" width="14" height="14" viewBox="0 0 14 14"><circle cx="7" cy="7" r="5.7" fill="none" stroke="#2d7fc0" stroke-width="1.2"/><path d="M5.1 5.6 Q5.1 3.7 7 3.7 Q8.9 3.7 8.9 5.4 Q8.9 6.4 7.9 6.9 Q7 7.4 7 8.4 L7 8.7" fill="none" stroke="#2d7fc0" stroke-width="1.2" stroke-linecap="round"/><circle cx="7" cy="10.2" r="0.75" fill="#2d7fc0"/></svg>
<svg class="a" style="left:328.20px;top:540.30px" width="14" height="14" viewBox="0 0 14 14"><circle cx="7" cy="7" r="5.7" fill="none" stroke="#2d7fc0" stroke-width="1.2"/><path d="M5.1 5.6 Q5.1 3.7 7 3.7 Q8.9 3.7 8.9 5.4 Q8.9 6.4 7.9 6.9 Q7 7.4 7 8.4 L7 8.7" fill="none" stroke="#2d7fc0" stroke-width="1.2" stroke-linecap="round"/><circle cx="7" cy="10.2" r="0.75" fill="#2d7fc0"/></svg>
<svg class="a" style="left:301.30px;top:694.70px" width="14" height="14" viewBox="0 0 14 14"><circle cx="7" cy="7" r="5.7" fill="none" stroke="#2d7fc0" stroke-width="1.2"/><path d="M5.1 5.6 Q5.1 3.7 7 3.7 Q8.9 3.7 8.9 5.4 Q8.9 6.4 7.9 6.9 Q7 7.4 7 8.4 L7 8.7" fill="none" stroke="#2d7fc0" stroke-width="1.2" stroke-linecap="round"/><circle cx="7" cy="10.2" r="0.75" fill="#2d7fc0"/></svg>
<div class="a" style="left:863.30px;top:481.20px;width:253.30px;height:22.70px;background:#fff;border:1px solid #c9c9c9;border-radius:1.5px;"></div>
<svg class="a" style="left:1095px;top:485px" width="15" height="14" viewBox="0 0 15 14"><path d="M5.4 3.7 V1.9 Q5.4 1.1 6.4 1.1 H12.3 Q13.1 1.1 13.1 1.9 V7.3 Q13.1 8.2 12.3 8.2 H9.9" fill="none" stroke="#41709c" stroke-width="1.15"/><rect x="1.4" y="5.5" width="7.3" height="7" rx="0.9" fill="none" stroke="#41709c" stroke-width="1.15"/></svg>
<div class="a" style="left:425.30px;top:632.80px;width:111.30px;height:22.70px;background:#fff;border:1px solid #c9c9c9;border-radius:1.5px;"></div>
<div class="t dk" style="left:432.40px;top:638.44px;font-size:12px;letter-spacing:0.15px">04.03.2019</div>
<svg class="a" style="left:515.30px;top:636.30px" width="14" height="15" viewBox="0 0 14 15"><rect x="1.1" y="3.1" width="11.6" height="11.2" rx="0.8" fill="none" stroke="#346392" stroke-width="1.2"/><rect x="0.6" y="2.5" width="12.6" height="2" fill="#346392"/><rect x="3.5" y="0.8" width="1.2" height="2.4" fill="#346392"/><rect x="9.1" y="0.8" width="1.2" height="2.4" fill="#346392"/><path d="M3.5 7.8 L5 6.7 V12.1 M9.4 12.1 V6.7 L6.5 10.3 H10.8" fill="none" stroke="#346392" stroke-width="1.15"/></svg>
<div class="t dk" style="left:540.60px;top:638.44px;font-size:12px;">/</div>
<div class="a" style="left:547.60px;top:632.80px;width:111.80px;height:22.70px;background:#fff;border:1px solid #c9c9c9;border-radius:1.5px;"></div>
<div class="t dk" style="left:554.70px;top:638.44px;font-size:12px;letter-spacing:0.15px">04.03.2019</div>
<svg class="a" style="left:637.90px;top:636.30px" width="14" height="15" viewBox="0 0 14 15"><rect x="1.1" y="3.1" width="11.6" height="11.2" rx="0.8" fill="none" stroke="#346392" stroke-width="1.2"/><rect x="0.6" y="2.5" width="12.6" height="2" fill="#346392"/><rect x="3.5" y="0.8" width="1.2" height="2.4" fill="#346392"/><rect x="9.1" y="0.8" width="1.2" height="2.4" fill="#346392"/><path d="M3.5 7.8 L5 6.7 V12.1 M9.4 12.1 V6.7 L6.5 10.3 H10.8" fill="none" stroke="#346392" stroke-width="1.15"/></svg>
<div class="a" style="left:425.30px;top:662.30px;width:111.30px;height:22.50px;background:#fff;border:1px solid #c9c9c9;border-radius:1.5px;"></div>
<div class="t dk" style="left:432.40px;top:667.84px;font-size:12px;">07:15</div>
<div class="a" style="left:540.60px;top:662.30px;width:111.80px;height:22.50px;background:#fff;border:1px solid #c9c9c9;border-radius:1.5px;"></div>
<div class="t dk" style="left:548.40px;top:667.84px;font-size:12px;">10:30</div>
<svg class="a" style="left:513.80px;top:665.10px" width="18" height="18" viewBox="0 0 18 18"><path d="M1.73 6.04 A7.2 7.2 0 1 1 7.25 15.59" fill="none" stroke="#41709c" stroke-width="1.15"/><path d="M7.8 5.1 V9.3 H12.5" fill="none" stroke="#41709c" stroke-width="1.15"/><path d="M1.2 11.4 H5.9 M1.2 13.15 H5.9 M1.2 14.9 H5.9" stroke="#41709c" stroke-width="0.85"/></svg>
<svg class="a" style="left:629.40px;top:665.10px" width="18" height="18" viewBox="0 0 18 18"><path d="M1.73 6.04 A7.2 7.2 0 1 1 7.25 15.59" fill="none" stroke="#41709c" stroke-width="1.15"/><path d="M7.8 5.1 V9.3 H12.5" fill="none" stroke="#41709c" stroke-width="1.15"/><path d="M1.2 11.4 H5.9 M1.2 13.15 H5.9 M1.2 14.9 H5.9" stroke="#41709c" stroke-width="0.85"/></svg>
<div class="t dk" style="left:425.00px;top:695.94px;font-size:12px;">3,25 Hour(s)</div>
<div class="a" style="left:687.90px;top:606.20px;width:428.70px;height:133.80px;background:#fff;border:1px solid #c9c9c9;"></div>
<div class="a" style="left:168.00px;top:710.80px;width:970.00px;height:9.20px;background:#fff;"></div>
</div></body></html>
